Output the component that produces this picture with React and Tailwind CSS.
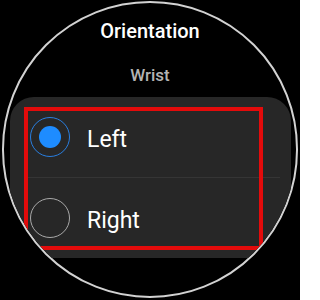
const options = [
  { label: "Left", checked: true },
  { label: "Right", checked: false },
];

function Radio({ checked }) {
  if (checked) {
    return (
      <div className="flex h-10 w-10 shrink-0 items-center justify-center rounded-full border-[1.5px] border-[#2a7fe0]">
        <div className="h-[22px] w-[22px] rounded-full bg-[#1e8cff]" />
      </div>
    );
  }
  return <div className="h-10 w-10 shrink-0 rounded-full border-[1.5px] border-[#a9a9a9]" />;
}

export default function App() {
  return (
    <div
      className="h-[300px] w-[300px] overflow-hidden bg-black pt-[1px]"
      style={{ fontFamily: "Roboto, 'Liberation Sans', sans-serif" }}
    >
      <div className="mx-auto flex h-[297px] w-[296px] flex-col overflow-hidden rounded-full border-2 border-[#d2d2d2] pt-4">
        <h1 className="text-center text-[20px] leading-6 font-medium text-white">Orientation</h1>
        <p className="mt-[22px] text-center text-[17px] leading-5 font-medium text-[#b3b3b3]">Wrist</p>

        <div className="relative mt-3 ml-[6px] mr-[5px] rounded-[24px] bg-[#272727]">
          {options.map((opt, i) => (
            <div key={opt.label}>
              {i > 0 && <div className="ml-[18px] mr-[11px] h-px bg-[#353535]" />}
              <div className="flex h-20 items-center gap-[17px] pl-5">
                <Radio checked={opt.checked} />
                <span className="pt-[5px] text-[23px] leading-7 text-white">{opt.label}</span>
              </div>
            </div>
          ))}

          <div className="pointer-events-none absolute top-[10px] left-[14px] h-[143px] w-[239px] border-4 border-[#e30b0b]" />
        </div>
      </div>
    </div>
  );
}
